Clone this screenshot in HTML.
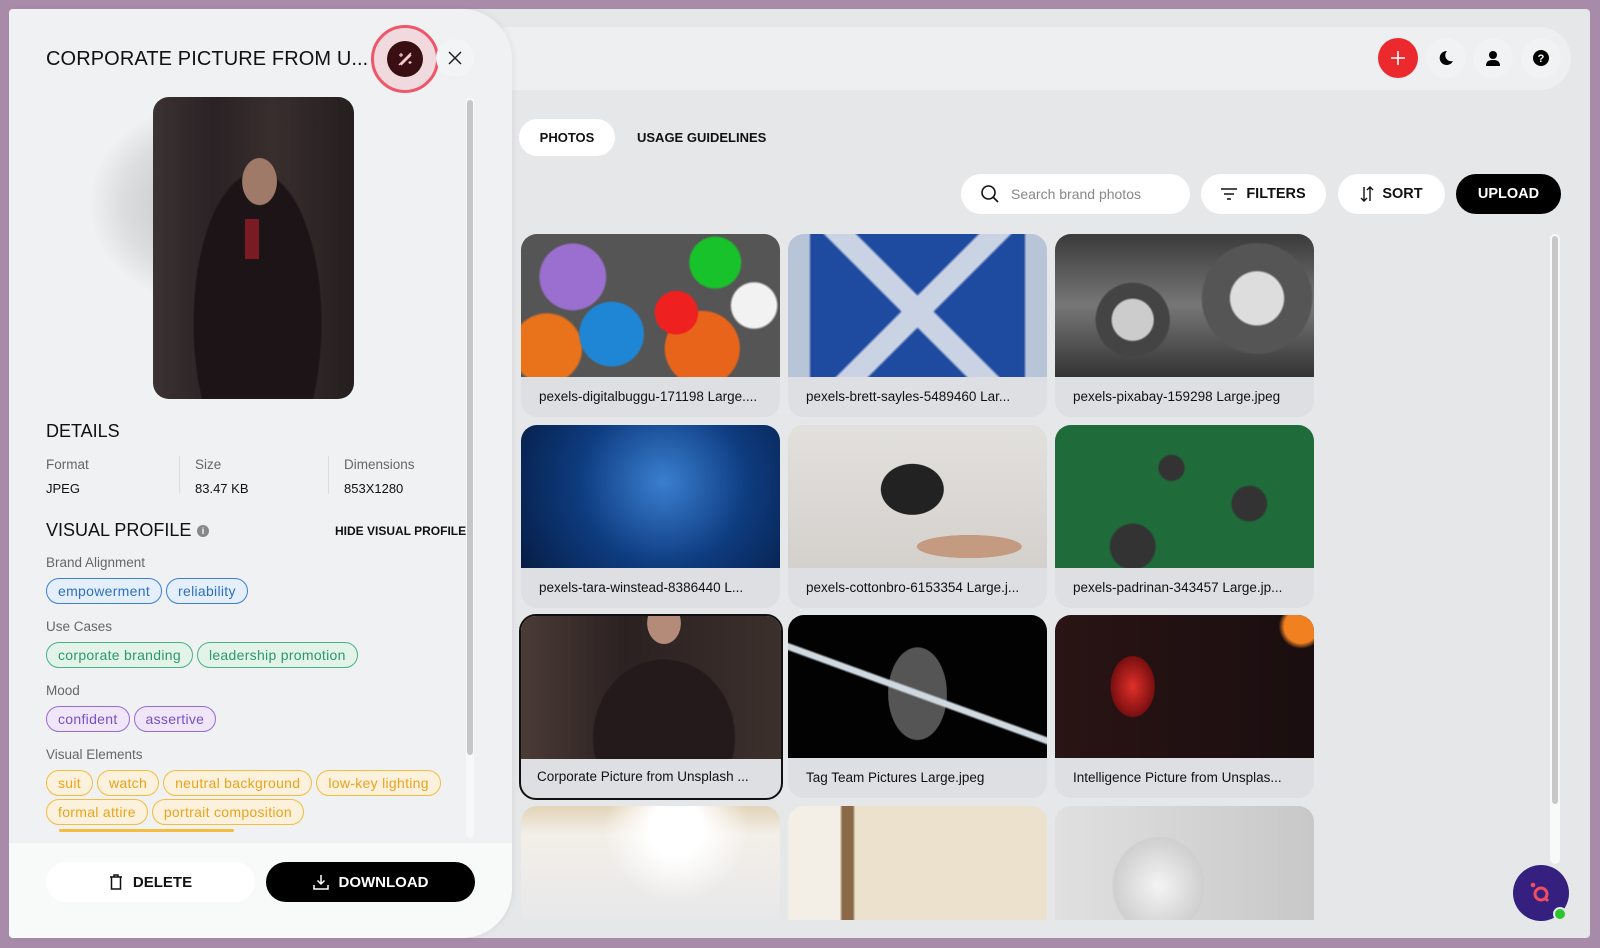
<!DOCTYPE html>
<html><head><meta charset="utf-8"><style>
*{box-sizing:border-box;margin:0;padding:0}
body{width:1600px;height:948px;overflow:hidden;background:#a88ba8;font-family:"Liberation Sans",sans-serif;position:relative;color:#111}
.main{position:absolute;left:9px;top:9px;width:1581px;height:929px;background:#e6e7e9;border-radius:4px;overflow:hidden}
.topbar{position:absolute;left:480px;top:27px;width:1091px;height:63px;background:#eeeff1;border-radius:32px}
.ib{position:absolute;top:38px;width:40px;height:40px;border-radius:50%;background:#f1f2f3;display:flex;align-items:center;justify-content:center}
.left{position:absolute;left:9px;top:9px;width:503px;height:929px;background:#f0f1f3;border-radius:4px 50px 50px 4px;overflow:hidden;box-shadow:2px 0 6px rgba(0,0,0,.05)}
.abs{position:absolute}
.tag{display:inline-block;height:26px;line-height:24px;border-radius:13px;padding:0 11px;font-size:14px;border:1px solid;margin-right:4px;white-space:nowrap;letter-spacing:.3px}
.b{color:#2d6fc4;border-color:#3b7fd6;background:#e5effb}
.g{color:#2a9a66;border-color:#48b283;background:#e3f3ea}
.p{color:#7a4fc4;border-color:#9a6ad6;background:#efe6f9}
.y{color:#eaa41a;border-color:#f3bd3e;background:#fbf1dc}
.lbl{font-size:13.5px;color:#666}
.card{position:absolute;width:259px;height:183px;border-radius:16px;background:#dedfe3;overflow:hidden}
.card .im{position:absolute;left:0;top:0;width:259px;height:143px}
.card .t{position:absolute;left:18px;top:155px;font-size:13.5px;color:#111;white-space:nowrap}
.pill{position:absolute;height:40px;border-radius:20px;background:#fff;display:flex;align-items:center;justify-content:center;font-weight:bold;font-size:14.5px}
</style></head><body>
<div class="main">
 <div class="topbar" style="left:471px;top:18px"></div>
</div>
<div class="ib" style="left:1378px;background:#ec2a2e"><svg width="18" height="18"><path d="M9 2v14M2 9h14" stroke="#fff" stroke-width="1.6"/></svg></div>
<div class="ib" style="left:1426px"><svg width="18" height="18" viewBox="0 0 18 18"><path d="M10 2a7 7 0 1 0 6 10a6 6 0 0 1-6-10z" fill="#000"/></svg></div>
<div class="ib" style="left:1473px"><svg width="18" height="18" viewBox="0 0 18 18"><circle cx="9" cy="6" r="4" fill="#000"/><path d="M2 17c0-5 3-6 7-6s7 1 7 6z" fill="#000"/></svg></div>
<div class="ib" style="left:1521px"><svg width="18" height="18"><circle cx="9" cy="9" r="8" fill="#000"/><text x="9" y="13" font-size="11" font-weight="bold" fill="#fff" text-anchor="middle" font-family="Liberation Sans">?</text></svg></div>

<div class="pill" style="left:519px;top:119px;width:96px;height:37px;font-size:13px">PHOTOS</div>
<div class="abs" style="left:637px;top:130px;font-size:13px;font-weight:bold">USAGE GUIDELINES</div>

<div class="pill" style="left:961px;top:174px;width:229px;justify-content:flex-start;padding-left:19px;font-weight:normal;color:#888;font-size:14px"><svg width="20" height="20" style="margin-right:11px"><circle cx="8.5" cy="8.5" r="6.5" fill="none" stroke="#111" stroke-width="1.6"/><path d="M13 13l5 5" stroke="#111" stroke-width="1.6"/></svg>Search brand photos</div>
<div class="pill" style="left:1201px;top:174px;width:125px"><svg width="16" height="12" style="margin-right:9px"><path d="M0 1h16M3 6h10M6 11h4" stroke="#111" stroke-width="1.6"/></svg>FILTERS</div>
<div class="pill" style="left:1338px;top:174px;width:107px"><svg width="14" height="16" style="margin-right:8px"><path d="M4 1v14M1 12l3 3 3-3M10 15V1M7 4l3-3 3 3" stroke="#111" stroke-width="1.4" fill="none"/></svg>SORT</div>
<div class="pill" style="left:1456px;top:174px;width:105px;background:#000;color:#fff">UPLOAD</div>

<!-- grid -->
<div class="card" style="left:521px;top:234px"><div class="im" style="background:radial-gradient(circle at 20% 30%,#9b6fd0 0 14%,transparent 15%),radial-gradient(circle at 75% 20%,#18c22a 0 11%,transparent 12%),radial-gradient(circle at 60% 55%,#ee2020 0 12%,transparent 13%),radial-gradient(circle at 35% 70%,#1f86d6 0 16%,transparent 17%),radial-gradient(circle at 70% 80%,#e8641a 0 17%,transparent 18%),radial-gradient(circle at 10% 80%,#e8731a 0 13%,transparent 14%),radial-gradient(circle at 90% 50%,#f2f2f2 0 9%,transparent 10%),#555"></div><div class="t">pexels-digitalbuggu-171198 Large....</div></div>
<div class="card" style="left:788px;top:234px"><div class="im" style="background:linear-gradient(45deg,transparent 44%,#c9d3e3 45% 52%,transparent 53%),linear-gradient(-45deg,transparent 44%,#c9d3e3 45% 52%,transparent 53%),linear-gradient(90deg,#b8c4d8 0 8%,#1e4aa0 9% 91%,#b8c4d8 92%)"></div><div class="t">pexels-brett-sayles-5489460 Lar...</div></div>
<div class="card" style="left:1055px;top:234px"><div class="im" style="background:radial-gradient(circle at 30% 60%,#ccc 0 10%,#444 11% 18%,transparent 19%),radial-gradient(circle at 78% 45%,#ddd 0 12%,#555 13% 25%,transparent 26%),linear-gradient(#3a3a3a,#777 50%,#333)"></div><div class="t">pexels-pixabay-159298 Large.jpeg</div></div>

<div class="card" style="left:521px;top:425px"><div class="im" style="background:radial-gradient(circle at 55% 40%,#3a7fd0,#0e3c80 50%,#061d45)"></div><div class="t">pexels-tara-winstead-8386440 L...</div></div>
<div class="card" style="left:788px;top:425px"><div class="im" style="background:radial-gradient(ellipse 15% 22% at 48% 45%,#222 0 80%,transparent 82%),radial-gradient(ellipse 25% 10% at 70% 85%,#c49a80 0 80%,transparent 82%),linear-gradient(#e2e0dd,#d4d1cd)"></div><div class="t">pexels-cottonbro-6153354 Large.j...</div></div>
<div class="card" style="left:1055px;top:425px"><div class="im" style="background:radial-gradient(circle at 45% 30%,#333 0 7%,transparent 8%),radial-gradient(circle at 75% 55%,#333 0 8%,transparent 9%),radial-gradient(circle at 30% 85%,#333 0 10%,transparent 11%),#1f6b3a"></div><div class="t">pexels-padrinan-343457 Large.jp...</div></div>

<div class="card" style="left:519px;top:614px;width:264px;height:186px;border:2px solid #111;border-radius:17px"><div class="im" style="width:260px;background:radial-gradient(ellipse 30% 60% at 55% 85%,#241a1c 0 90%,transparent 92%),radial-gradient(ellipse 8% 18% at 55% 5%,#b48a78 0 80%,transparent 82%),linear-gradient(90deg,#4a3b36,#2b2121 40%,#3c302c)"></div><div class="t" style="left:16px;top:153px">Corporate Picture from Unsplash ...</div></div>
<div class="card" style="left:788px;top:615px"><div class="im" style="background:linear-gradient(20deg,transparent 45%,#d0d8e0 46% 48%,transparent 49%),radial-gradient(ellipse 14% 40% at 50% 55%,#555 0 80%,transparent 82%),#020202"></div><div class="t">Tag Team Pictures Large.jpeg</div></div>
<div class="card" style="left:1055px;top:615px"><div class="im" style="background:radial-gradient(ellipse 12% 30% at 30% 50%,#e0302a,#7a0f10 70%,transparent 72%),radial-gradient(circle at 95% 8%,#f08020 0 6%,transparent 8%),linear-gradient(90deg,#2a1414,#1a0e10)"></div><div class="t">Intelligence Picture from Unsplas...</div></div>

<div class="card" style="left:521px;top:806px;height:114px;border-radius:16px 16px 0 0"><div class="im" style="height:114px;background:radial-gradient(circle at 60% 20%,#fff 0 15%,transparent 40%),linear-gradient(#e2d3b8,#f3efe8 25%,#e8e8ea)"></div></div>
<div class="card" style="left:788px;top:806px;height:114px;border-radius:16px 16px 0 0"><div class="im" style="height:114px;background:linear-gradient(90deg,#f3efe6 0 20%,#8a6a48 21% 25%,#ece1cc 26%)"></div></div>
<div class="card" style="left:1055px;top:806px;height:114px;border-radius:16px 16px 0 0"><div class="im" style="height:114px;background:radial-gradient(ellipse 25% 60% at 40% 70%,#f4f4f4,#cfcfcf 70%,transparent 72%),linear-gradient(90deg,#e0e0e0,#c8c8c8)"></div></div>

<!-- right scrollbar -->
<div class="abs" style="left:1550px;top:234px;width:10px;height:630px;background:#f8f9f9;border-radius:5px"></div>
<div class="abs" style="left:1552px;top:236px;width:6px;height:568px;background:#c8c8c8;border-radius:3px"></div>
<div class="abs" style="left:1513px;top:865px;width:56px;height:56px;border-radius:50%;background:#35207f"></div>
<svg class="abs" style="left:1527px;top:879px" width="28" height="28"><circle cx="14" cy="15" r="6" fill="none" stroke="#f04e5e" stroke-width="3"/><path d="M18 19l3 3" stroke="#f04e5e" stroke-width="3"/><circle cx="6" cy="6" r="2.3" fill="#f04e5e"/></svg>
<div class="abs" style="left:1553px;top:907px;width:14px;height:14px;border-radius:50%;background:#2cc52c;border:2px solid #e6e7e9"></div>

<!-- left panel -->
<div class="left">
 <div class="abs" style="left:37px;top:39px;font-size:20px;letter-spacing:.1px">CORPORATE PICTURE FROM U...</div>
 <div class="abs" style="left:362px;top:16px;width:68px;height:68px;border-radius:50%;border:3px solid #f0566a;background:rgba(240,86,106,.15)"></div>
 <div class="abs" style="left:378px;top:32px;width:36px;height:36px;border-radius:50%;background:#3a0f14"></div>
 <svg class="abs" style="left:386px;top:40px" width="20" height="20"><path d="M4 16L16 4M6 16L16 6" stroke="#f6c9cc" stroke-width="1.5"/><path d="M6 4v4M4 6h4M15 12v3M13.5 13.5h3" stroke="#f6c9cc" stroke-width="1.2"/></svg>
 <div class="abs" style="left:427px;top:30px;width:38px;height:38px;border-radius:50%;background:#f3f4f5"></div>
 <svg class="abs" style="left:438px;top:41px" width="16" height="16"><path d="M2 2l12 12M14 2L2 14" stroke="#222" stroke-width="1.5"/></svg>
 <div class="abs" style="left:40px;top:60px;width:320px;height:300px;background:radial-gradient(ellipse 50% 45% at 50% 45%,rgba(0,0,0,.22),rgba(0,0,0,.08) 55%,transparent 75%)"></div>
 <div class="abs" style="left:144px;top:88px;width:201px;height:302px;border-radius:16px;background:radial-gradient(ellipse 10% 9% at 53% 28%,#a07a68 0 85%,transparent 88%),radial-gradient(ellipse 35% 55% at 52% 75%,#1c1416 0 90%,transparent 92%),linear-gradient(90deg,#3a3233,#2a2224 30%,#382e2e 60%,#251e1f)"></div>
 <div class="abs" style="left:236px;top:210px;width:14px;height:40px;background:#7a1a22"></div>
 <div class="abs" style="left:457px;top:89px;width:8px;height:740px;background:#f7f8f8;border-radius:4px"></div>
 <div class="abs" style="left:458px;top:91px;width:6px;height:655px;background:#c6c6c6;border-radius:3px"></div>

 <div class="abs" style="left:37px;top:412px;font-size:18px">DETAILS</div>
 <div class="abs lbl" style="left:37px;top:448px">Format</div><div class="abs" style="left:37px;top:472px;font-size:13px">JPEG</div>
 <div class="abs" style="left:170px;top:447px;width:1px;height:38px;background:#ddd"></div>
 <div class="abs lbl" style="left:186px;top:448px">Size</div><div class="abs" style="left:186px;top:472px;font-size:13px">83.47 KB</div>
 <div class="abs" style="left:319px;top:447px;width:1px;height:38px;background:#ddd"></div>
 <div class="abs lbl" style="left:335px;top:448px">Dimensions</div><div class="abs" style="left:335px;top:472px;font-size:13px">853X1280</div>

 <div class="abs" style="left:37px;top:511px;font-size:18px">VISUAL PROFILE</div>
 <div class="abs" style="left:188px;top:516px;width:12px;height:12px;border-radius:50%;background:#888;color:#fff;font-size:9px;text-align:center;line-height:12px;font-weight:bold">i</div>
 <div class="abs" style="left:326px;top:515px;font-size:12px;font-weight:bold">HIDE VISUAL PROFILE</div>

 <div class="abs lbl" style="left:37px;top:546px">Brand Alignment</div>
 <div class="abs" style="left:37px;top:569px"><span class="tag b">empowerment</span><span class="tag b">reliability</span></div>
 <div class="abs lbl" style="left:37px;top:610px">Use Cases</div>
 <div class="abs" style="left:37px;top:633px"><span class="tag g">corporate branding</span><span class="tag g">leadership promotion</span></div>
 <div class="abs lbl" style="left:37px;top:674px">Mood</div>
 <div class="abs" style="left:37px;top:697px"><span class="tag p">confident</span><span class="tag p">assertive</span></div>
 <div class="abs lbl" style="left:37px;top:738px">Visual Elements</div>
 <div class="abs" style="left:37px;top:761px"><span class="tag y">suit</span><span class="tag y">watch</span><span class="tag y">neutral background</span><span class="tag y">low-key lighting</span></div>
 <div class="abs" style="left:37px;top:790px"><span class="tag y">formal attire</span><span class="tag y">portrait composition</span></div>
 <div class="abs" style="left:50px;top:820px;width:175px;height:3px;background:#f3bd3e;border-radius:2px"></div>

 <div class="abs" style="left:0;top:834px;width:503px;height:95px;background:#f8f9f9"></div>
 <div class="pill" style="left:37px;top:853px;width:209px;font-weight:bold;font-size:15px"><svg width="14" height="16" style="margin-right:10px"><path d="M1 3h12M5 3V1h4v2M2.5 3v12h9V3" stroke="#111" stroke-width="1.5" fill="none"/></svg>DELETE</div>
 <div class="pill" style="left:257px;top:853px;width:209px;background:#000;color:#fff;font-size:15px"><svg width="16" height="16" style="margin-right:10px"><path d="M8 1v9M4.5 6.5L8 10l3.5-3.5M1 11v4h14v-4" stroke="#fff" stroke-width="1.5" fill="none"/></svg>DOWNLOAD</div>
</div>
</body></html>
